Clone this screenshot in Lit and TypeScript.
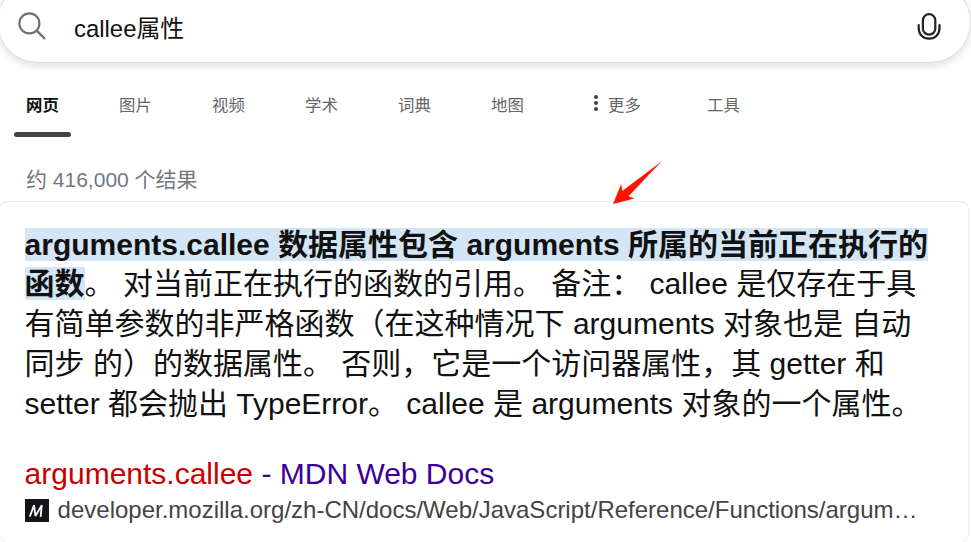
import { LitElement, html, css } from "lit";
import { customElement } from "lit/decorators.js";
import { classMap } from "lit/directives/class-map.js";

const TABS = ["网页", "图片", "视频", "学术", "词典", "地图"];

@customElement("search-bar")
class SearchBar extends LitElement {
  static styles = css`
    :host {
      display: flex;
      align-items: flex-start;
      box-sizing: border-box;
      height: 82px;
      margin: -19px 0 0 -3px;
      padding: 30px 28px 0 20px;
      border-radius: 41px;
      border: 1px solid #dcdcdc;
      background: #fff;
      box-shadow: 0 3px 9px rgba(0, 0, 0, 0.13);
    }
    svg { display: block; flex: none; }
    .query {
      flex: 1;
      margin-left: 27px;
      margin-top: -1px;
      font-size: 23.9px;
      line-height: 36px;
      color: #111;
    }
    .mic { margin: 0 1px 0 0; }
  `;
  render() {
    return html`
      <svg width="29" height="29" viewBox="0 0 29 29" fill="none" stroke="#6c7178" stroke-width="2.1">
        <circle cx="11.4" cy="11.4" r="10" />
        <path d="M18.6 18.4 L27 27" stroke-width="2.4" />
      </svg>
      <span class="query">callee属性</span>
      <svg class="mic" width="24" height="28" viewBox="0 0 24 28" fill="none" stroke="#222228" stroke-width="2.2" stroke-linecap="round">
        <rect x="5.9" y="2.1" width="12.4" height="20.6" rx="6.2" />
        <path d="M1.7 13 V16 C1.7 22.4 6 26.7 12.1 26.7 S22.5 22.4 22.5 16 V13" />
      </svg>
    `;
  }
}

@customElement("scope-tabs")
class ScopeTabs extends LitElement {
  static styles = css`
    :host {
      display: flex;
      height: 74px;
      padding: 0 14px;
      box-sizing: border-box;
      font-size: 16.4px;
      color: #666;
    }
    .tab {
      box-sizing: border-box;
      width: 57px;
      height: 44px;
      margin-right: 36px;
      margin-top: 30px;
      padding-left: 12px;
      line-height: 24px;
      white-space: nowrap;
      flex: none;
    }
    .active { color: #111; font-weight: 700; }
    .bar {
      width: 57px;
      height: 5px;
      margin: 15px 0 0 -12px;
      border-radius: 2.5px;
      background: #444;
    }
    .more { display: flex; width: 115px; margin-right: 0; padding-left: 21px; }
    .more svg { margin: 0 9px 0 0; flex: none; }
    .tools { margin: 30px 0 0 20px; line-height: 24px; }
  `;
  render() {
    return html`
      ${TABS.map((label, i) => html`
        <div class=${classMap({ tab: true, active: i === 0 })}>
          ${label}${i === 0 ? html`<div class="bar"></div>` : ""}
        </div>`)}
      <div class="tab more">
        <svg width="6" height="20" viewBox="0 0 6 20" fill="#444">
          <circle cx="3" cy="4" r="2.1" /><circle cx="3" cy="10" r="2.1" /><circle cx="3" cy="16" r="2.1" />
        </svg>更多
      </div>
      <div class="tools">工具</div>
    `;
  }
}

@customElement("answer-card")
class AnswerCard extends LitElement {
  static styles = css`
    :host {
      display: block;
      box-sizing: border-box;
      height: 342px;
      margin: 0 2px 0 -1px;
      padding: 23px 0 0 24.6px;
      border: 1px solid #ececec;
      border-radius: 9px;
      background: #fff;
    }
    .answer { font-size: 30px; line-height: 40px; color: #111; }
    .line { display: block; height: 40px; white-space: pre; }
    .line:first-child { height: 39px; }
    mark {
      display: inline-block;
      height: 33px;
      line-height: 33px;
      font-weight: 700;
      color: #111;
      background: #d4e6f5;
    }
    .title {
      margin-top: 30px;
      font-size: 30px;
      line-height: 40px;
      color: #3b0099;
      white-space: nowrap;
    }
    .hit { color: #c80000; }
    .source { display: flex; align-items: center; height: 32px; }
    .source svg { flex: none; margin-right: 9px; }
    .url { font-size: 24px; line-height: 32px; color: #444; white-space: nowrap; }
  `;
  render() {
    return html`
      <div class="answer">
        <span class="line"><mark>arguments.callee 数据属性包含 arguments 所属的当前正在执行的</mark></span>
        <span class="line"><mark>函数</mark>。 对当前正在执行的函数的引用。 备注： callee 是仅存在于具</span>
        <span class="line">有简单参数的非严格函数（在这种情况下 arguments 对象也是 自动</span>
        <span class="line">同步 的）的数据属性。 否则，它是一个访问器属性，其 getter 和</span>
        <span class="line">setter 都会抛出 TypeError。 callee 是 arguments 对象的一个属性。</span>
      </div>
      <div class="title"><span class="hit">arguments.callee</span> - MDN Web Docs</div>
      <div class="source">
        <svg width="24" height="23" viewBox="0 0 24 23">
          <rect width="24" height="23" fill="#15141a" />
          <path d="M4.8 17.8 L9 6.2 L10.4 17 L16.8 6.2 L15.6 17.8" fill="none" stroke="#fff" stroke-width="1.8" stroke-linejoin="bevel" />
        </svg>
        <span class="url">developer.mozilla.org/zh-CN/docs/Web/JavaScript/Reference/Functions/argum…</span>
      </div>
    `;
  }
}

@customElement("app-root")
class AppRoot extends LitElement {
  static styles = css`
    :host {
      display: flex;
      flex-direction: column;
      height: 542px;
      overflow: hidden;
      position: relative;
      background: #fff;
      font-family: "Liberation Sans", "Noto Sans CJK SC", sans-serif;
    }
    search-bar, scope-tabs, answer-card { flex: none; }
    .count {
      height: 44px;
      margin-top: 20px;
      padding-left: 26px;
      flex: none;
      font-size: 21px;
      line-height: 45px;
      color: #71777d;
    }
    .arrow { position: absolute; left: 612px; top: 160px; }
  `;
  render() {
    return html`
      <search-bar></search-bar>
      <scope-tabs></scope-tabs>
      <div class="count">约 416,000 个结果</div>
      <answer-card></answer-card>
      <svg class="arrow" width="52" height="46" viewBox="0 0 52 46">
        <path d="M1 44 L9.2 24 L10.2 31 L49.5 1.5 L16.5 36.2 L22.3 38.5 Z" fill="#ff1200" />
      </svg>
    `;
  }
}
